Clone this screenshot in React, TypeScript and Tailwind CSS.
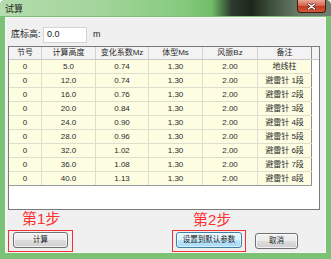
import React from 'react';

const cols = [33, 54, 53, 54, 55, 54];
const headers = ['节号', '计算高度', '变化系数Mz', '体型Ms', '风振Bz', '备注'];

const rows = [
  ['0', '5.0', '0.74', '1.30', '2.00', '地线柱'],
  ['0', '12.0', '0.74', '1.30', '2.00', '避雷针 1段'],
  ['0', '16.0', '0.76', '1.30', '2.00', '避雷针 2段'],
  ['0', '20.0', '0.84', '1.30', '2.00', '避雷针 3段'],
  ['0', '24.0', '0.90', '1.30', '2.00', '避雷针 4段'],
  ['0', '28.0', '0.96', '1.30', '2.00', '避雷针 5段'],
  ['0', '32.0', '1.02', '1.30', '2.00', '避雷针 6段'],
  ['0', '36.0', '1.08', '1.30', '2.00', '避雷针 7段'],
  ['0', '40.0', '1.13', '1.30', '2.00', '避雷针 8段'],
];

const font = { fontFamily: '"Liberation Sans", "Noto Sans CJK SC", sans-serif' };

const WinButton: React.FC<{ label: string; width: number; focused?: boolean }> = ({ label, width, focused }) => (
  <div
    className={`h-[16px] flex items-center justify-center rounded-[3px] border text-[7.5px] text-[#1a1a1a] ${
      focused
        ? 'border-[#3c7fb1] bg-[linear-gradient(to_bottom,#eaf6fd_0%,#d9f0fc_50%,#bee6fd_50%,#a7d9f5_100%)] shadow-[inset_0_0_0_1px_rgba(255,255,255,0.6)]'
        : 'border-[#707070] bg-[linear-gradient(to_bottom,#f2f2f2_0%,#ebebeb_50%,#dddddd_50%,#cfcfcf_100%)] shadow-[inset_0_0_0_1px_rgba(255,255,255,0.7)]'
    }`}
    style={{ width }}
  >
    {label}
  </div>
);

export default function App() {
  return (
    <div className="w-[331px] h-[259px] flex flex-col bg-[#7cc276] rounded-t-[5px] overflow-hidden" style={font}>
      {/* title bar */}
      <div className="h-[16px] flex items-start justify-between bg-[linear-gradient(to_right,#b4dcad_0%,#a3d59b_30%,#86cb7e_55%,#6fbd68_64%,#2c3a2c_70%,#1c271c_76%,#3e513e_82%,#687a68_90%,#6f7f6f_100%)]">
        <span className="pl-[5px] pt-[4px] text-[9px] leading-[10px] text-[#1e1e1e]">试算</span>
        <div className="mr-[5px] w-[29px] h-[13px] flex items-center justify-center rounded-b-[4px] border border-t-0 border-[#4a1a12] bg-[linear-gradient(to_bottom,#e9a899_0%,#d8674f_45%,#c23a1f_55%,#d45a3c_100%)]">
          <svg width="9" height="7" viewBox="0 0 9 7">
            <path d="M1.5 1 L7.5 6 M7.5 1 L1.5 6" stroke="#3a1a14" strokeWidth="2.6" strokeLinecap="round" />
            <path d="M1.5 1 L7.5 6 M7.5 1 L1.5 6" stroke="#ffffff" strokeWidth="1.6" strokeLinecap="round" />
          </svg>
        </div>
      </div>

      {/* client area */}
      <div className="flex-1 mx-[5px] mb-[6px] mt-[1px] border border-[#f8f8f8] bg-[#f0f0f0] flex flex-col">
        <div className="mt-[9px] h-[16px] flex items-center text-[9px] text-[#1e1e1e]">
          <span className="w-[37px] pl-[5px]">底标高:</span>
          <div className="w-[44px] h-[16px] bg-white border border-[#d4d4d4] flex items-center pl-[3px]">0.0</div>
          <span className="ml-[6px]">m</span>
        </div>

        {/* grid */}
        <div className="mt-[3px] ml-[2px] w-[312px] h-[164px] border border-[#7a7a7a] bg-white">
          <div className="flex h-[13px] bg-[#f3f3f3] border-b border-[#c8c8c8]">
            {headers.map((h, i) => (
              <div
                key={h}
                className={`flex items-center justify-center text-[8px] text-[#2a2a2a] border-r ${
                  i === cols.length - 1 ? 'border-[#8c8c8c]' : 'border-[#d2d2d2]'
                }`}
                style={{ width: cols[i] }}
              >
                {h}
              </div>
            ))}
          </div>
          {rows.map((r, ri) => (
            <div
              key={ri}
              className={`flex h-[14px] border-b ${ri === rows.length - 1 ? 'border-[#9a9a9a]' : 'border-[#dedecf]'}`}
              style={{ width: 303 }}
            >
              {r.map((c, i) => (
                <div
                  key={i}
                  className={`flex items-center justify-center bg-[#fdfde2] text-[8px] text-[#2a2a2a] border-r ${
                    i === cols.length - 1 ? 'border-[#8c8c8c]' : 'border-[#dedecf]'
                  }`}
                  style={{ width: cols[i] }}
                >
                  {c}
                </div>
              ))}
            </div>
          ))}
        </div>

        {/* bottom buttons */}
        <div className="flex-1 flex items-end justify-between pl-[2px] pr-[27px]">
          <div className="flex flex-col">
            <span className="ml-[14px] text-[15px] leading-[15px] text-[#ff3030]">第1步</span>
            <div className="mt-[4px] w-[65px] h-[22px] border border-[#f03232] pl-[4px] pt-[1px]">
              <WinButton label="计算" width={55} />
            </div>
          </div>
          <div className="flex items-end">
            <div className="flex flex-col">
              <span className="ml-[21px] text-[15px] leading-[15px] text-[#ff3030]">第2步</span>
              <div className="mt-[3px] w-[74px] h-[22px] border border-[#f03232] pl-[3px] pt-[1px]">
                <WinButton label="设置到默认参数" width={66} focused />
              </div>
            </div>
            <div className="ml-[9px] mb-[3px]">
              <WinButton label="取消" width={43} />
            </div>
          </div>
        </div>
      </div>
    </div>
  );
}
